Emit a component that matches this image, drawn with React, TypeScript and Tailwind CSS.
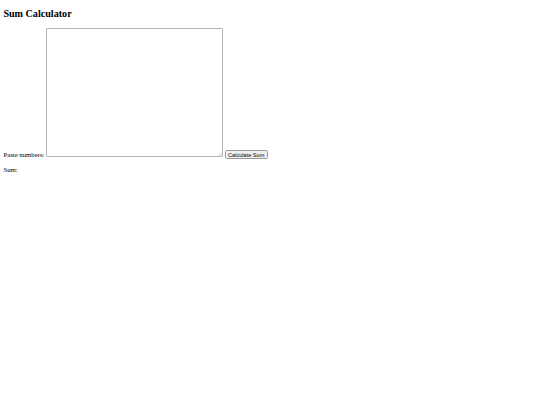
export default function App() {
  return (
    <div className="flow-root px-[3.375px] bg-white text-black min-h-[405px] font-['Liberation_Serif',serif] leading-[normal]">
      <h2 className="mt-[8.4px] mb-[8.4px] text-[10.125px] font-bold leading-[normal]">Sum Calculator</h2>
      <div className="text-[6.75px] leading-[normal]">
        <label>Paste numbers:</label>{" "}
        <span className="relative inline-block align-baseline">
          <textarea className="block box-border w-[177px] h-[129px] border border-[#b4b4b4] rounded-[1px] p-[1px] bg-white outline-none resize-none"></textarea>
          <svg className="absolute right-[1px] bottom-[1px] w-[4px] h-[4px]" viewBox="0 0 4 4">
            <path d="M0.5 3.8 L3.8 0.5 M2 3.8 L3.8 2" stroke="#b8b8b8" strokeWidth="0.6" />
          </svg>
        </span>{" "}
        <button className="bg-[#efefef] border border-[#9a9a9a] rounded-[1.5px] px-[2.2px] py-[0.5px] text-[5.6px] leading-[normal] font-['Liberation_Sans',sans-serif] text-black">
          Calculate Sum
        </button>
      </div>
      <p className="mt-[6.75px] text-[6.75px] leading-[normal]">Sum: </p>
    </div>
  );
}
